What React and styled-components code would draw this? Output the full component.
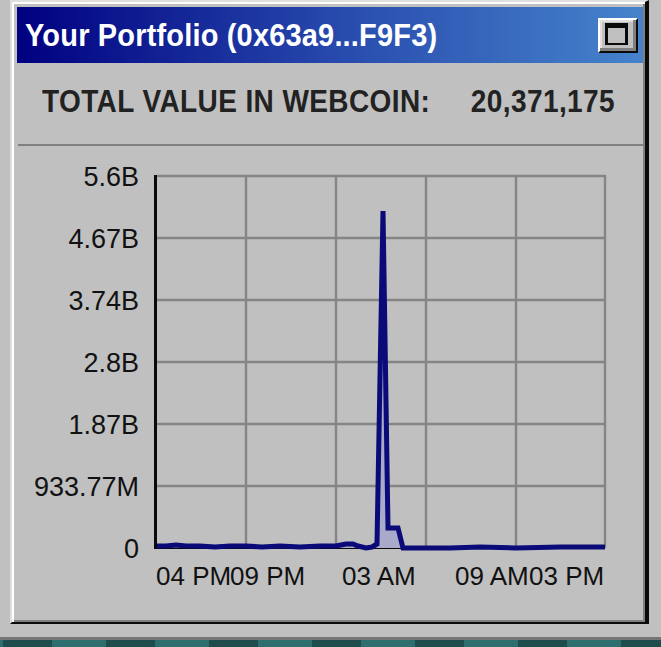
import React from "react";
import styled, { createGlobalStyle } from "styled-components";

const GlobalStyle = createGlobalStyle`
  html, body {
    margin: 0;
    padding: 0;
    background: #c0c0c0;
    font-family: "Liberation Sans", Arial, sans-serif;
  }
`;

const Screen = styled.div`
  display: flex;
  flex-direction: column;
  width: 661px;
`;

const Window = styled.section`
  box-sizing: border-box;
  margin-left: 10px;
  width: 639px;
  height: 624px;
  display: flex;
  flex-direction: column;
  background: #c0c0c0;
  border-style: solid;
  border-width: 2px 4px 2px 2px;
  border-color: #dfdfdf #0a0a0a #0a0a0a #dfdfdf;
  box-shadow: inset 2px 2px #ffffff, inset -2px -2px #808080;
  padding: 5px 2px 2px 5px;
`;

const TitleBar = styled.header`
  height: 56px;
  flex: none;
  display: flex;
  align-items: center;
  justify-content: space-between;
  padding: 0 5px 0 8px;
  background: linear-gradient(90deg, #000080 0%, #2a4fb0 55%, #4683cb 100%);
`;

const TitleText = styled.span`
  display: inline-block;
  color: #ffffff;
  font-family: "Liberation Sans", Arial, sans-serif;
  font-weight: 700;
  font-size: 29px;
  line-height: 1;
  letter-spacing: 0.17px;
  transform: scaleY(1.1);
  white-space: nowrap;
`;

const MaxButton = styled.button`
  box-sizing: border-box;
  width: 40px;
  height: 35px;
  padding: 0 3px 2px 0;
  margin: 0;
  display: flex;
  align-items: center;
  justify-content: center;
  background: #c0c0c0;
  border-style: solid;
  border-width: 2px;
  border-color: #ffffff #0a0a0a #0a0a0a #ffffff;
  box-shadow: inset -3px -3px #808080, inset 2px 2px #dfdfdf;
`;

const MaxIcon = styled.span`
  box-sizing: border-box;
  display: block;
  width: 23px;
  height: 22px;
  border: 3px solid #0a0a0a;
  border-top-width: 5px;
  border-bottom-width: 2px;
  background: #c0c0c0;
`;

const HeaderRow = styled.div`
  box-sizing: border-box;
  height: 81px;
  flex: none;
  display: flex;
  align-items: center;
  justify-content: space-between;
  padding: 0 28px 4px 25px;
`;

const HeaderText = styled.span`
  display: inline-block;
  color: #222222;
  font-family: "Liberation Sans", Arial, sans-serif;
  font-weight: 700;
  font-size: 28px;
  line-height: 1;
  letter-spacing: 0.4px;
  transform: scaleY(1.15);
  white-space: nowrap;
`;

const Divider = styled.hr`
  margin: 0 0 0 1px;
  border: 0;
  height: 2px;
  flex: none;
  background: #808080;
`;

const ChartBox = styled.div`
  flex: 1;
  display: flex;
`;

const ChartSvg = styled.svg`
  display: block;
  font-family: "Liberation Sans", Arial, sans-serif;
`;

const Desktop = styled.div`
  margin-top: 13px;
  height: 20px;
  border-top: 3px solid #767676;
  background: repeating-linear-gradient(
    90deg,
    #2d6e6e 0px,
    #2d6e6e 3px,
    #1f4d4d 3px,
    #1f4d4d 52px,
    #2d6e6e 52px,
    #2d6e6e 103px
  );
`;

const yTicks = [
  { label: "5.6B", y: 176 },
  { label: "4.67B", y: 238 },
  { label: "3.74B", y: 300 },
  { label: "2.8B", y: 362 },
  { label: "1.87B", y: 424 },
  { label: "933.77M", y: 486 },
  { label: "0", y: 548 },
];

const xGrid = [246, 336, 426, 516, 605];

const xLabels = [
  { label: "04 PM", x: 156 },
  { label: "09 PM", x: 230 },
  { label: "03 AM", x: 342 },
  { label: "09 AM", x: 455 },
  { label: "03 PM", x: 529 },
];

const data = [
  [157, 546], [166, 546], [176, 545], [186, 546], [200, 546], [215, 547],
  [230, 546], [246, 546], [262, 547], [280, 546], [300, 547], [320, 546],
  [336, 546], [341, 545], [346, 544], [353, 544], [358, 546], [366, 548],
  [372, 547], [377, 544], [383, 211], [388, 528], [398, 528], [403, 548],
  [420, 548], [450, 548], [480, 547], [516, 548], [560, 547], [605, 547],
];

const linePoints = data.map((p) => p.join(",")).join(" ");
const fillPoints = `${linePoints} 605,548 157,548`;

function Chart() {
  return (
    <ChartSvg width="626" height="474" viewBox="17 146 626 474">
      {yTicks.slice(0, 6).map((t) => (
        <line key={t.y} x1="157" x2="605" y1={t.y} y2={t.y} stroke="#858585" strokeWidth="2.4" />
      ))}
      {xGrid.map((x) => (
        <line key={x} x1={x} x2={x} y1="175" y2="548" stroke="#858585" strokeWidth="2.4" />
      ))}
      <line x1="155.5" x2="155.5" y1="175" y2="549" stroke="#0a0a0a" strokeWidth="3" />
      <line x1="154" x2="605" y1="547.5" y2="547.5" stroke="#0a0a0a" strokeWidth="3" />
      <polygon points={fillPoints} fill="#a9a9c9" />
      <polyline points={linePoints} fill="none" stroke="#0a0a78" strokeWidth="5" />
      {yTicks.map((t) => (
        <text key={t.label} x="139" y={t.y + 9.5} textAnchor="end" fontSize="27" fill="#111">
          {t.label}
        </text>
      ))}
      {xLabels.map((l) => (
        <text key={l.label} x={l.x} y="585" fontSize="26" fill="#111">
          {l.label}
        </text>
      ))}
    </ChartSvg>
  );
}

export default function App() {
  return (
    <>
      <GlobalStyle />
      <Screen>
        <Window>
          <TitleBar>
            <TitleText>Your Portfolio (0x63a9...F9F3)</TitleText>
            <MaxButton aria-label="Maximize">
              <MaxIcon />
            </MaxButton>
          </TitleBar>
          <HeaderRow>
            <HeaderText>TOTAL VALUE IN WEBCOIN:</HeaderText>
            <HeaderText>20,371,175</HeaderText>
          </HeaderRow>
          <Divider />
          <ChartBox>
            <Chart />
          </ChartBox>
        </Window>
        <Desktop />
      </Screen>
    </>
  );
}
